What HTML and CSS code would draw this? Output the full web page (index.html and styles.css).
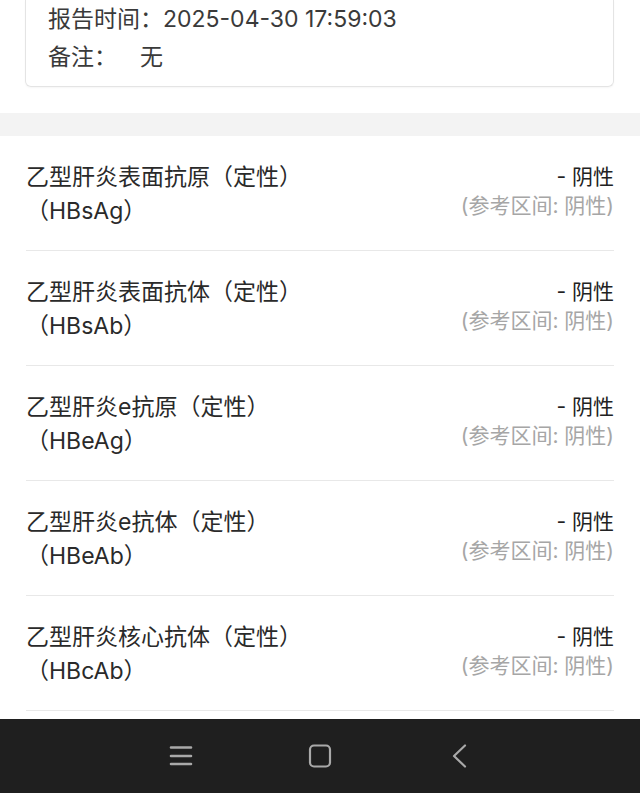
FILE: index.html
```html
<!DOCTYPE html>
<html lang="zh-CN">
<head>
    <meta charset="UTF-8">
    <meta name="viewport" content="width=device-width, initial-scale=1.0">
    <title>检验报告</title>
    <link rel="stylesheet" href="styles.css">
</head>
<body>
    <section class="report-card">
        <div class="info-line">报告时间：2025-04-30 17:59:03</div>
        <div class="info-line"><span class="info-label">备注：</span>无</div>
    </section>

    <div class="band"></div>

    <ul class="result-list">
        <li class="result-row">
            <div class="item-name">
                <span class="name-line">乙型肝炎表面抗原（定性）</span>
                <span class="name-line">（HBsAg）</span>
            </div>
            <div class="item-value">
                <span class="value">- 阴性</span>
                <span class="range">(参考区间: 阴性)</span>
            </div>
        </li>
        <li class="result-row">
            <div class="item-name">
                <span class="name-line">乙型肝炎表面抗体（定性）</span>
                <span class="name-line">（HBsAb）</span>
            </div>
            <div class="item-value">
                <span class="value">- 阴性</span>
                <span class="range">(参考区间: 阴性)</span>
            </div>
        </li>
        <li class="result-row">
            <div class="item-name">
                <span class="name-line">乙型肝炎e抗原（定性）</span>
                <span class="name-line">（HBeAg）</span>
            </div>
            <div class="item-value">
                <span class="value">- 阴性</span>
                <span class="range">(参考区间: 阴性)</span>
            </div>
        </li>
        <li class="result-row">
            <div class="item-name">
                <span class="name-line">乙型肝炎e抗体（定性）</span>
                <span class="name-line">（HBeAb）</span>
            </div>
            <div class="item-value">
                <span class="value">- 阴性</span>
                <span class="range">(参考区间: 阴性)</span>
            </div>
        </li>
        <li class="result-row">
            <div class="item-name">
                <span class="name-line">乙型肝炎核心抗体（定性）</span>
                <span class="name-line">（HBcAb）</span>
            </div>
            <div class="item-value">
                <span class="value">- 阴性</span>
                <span class="range">(参考区间: 阴性)</span>
            </div>
        </li>
    </ul>

    <nav class="nav-bar">
        <svg class="nav-icon" viewBox="0 0 24 24" width="24" height="24">
            <path d="M2 3.5h20M2 12h20M2 20h20" stroke="#a9a9a9" stroke-width="2.6" stroke-linecap="round" fill="none"/>
        </svg>
        <svg class="nav-icon" viewBox="0 0 24 24" width="24" height="24">
            <rect x="2" y="1.5" width="20" height="21" rx="4" stroke="#a9a9a9" stroke-width="2.2" fill="none"/>
        </svg>
        <svg class="nav-icon" viewBox="0 0 24 24" width="24" height="24">
            <path d="M18 1.5L7 12l11 10.5" stroke="#a9a9a9" stroke-width="2.2" stroke-linecap="round" stroke-linejoin="round" fill="none"/>
        </svg>
    </nav>
</body>
</html>
```

FILE: styles.css
```css
body {
    margin: 0;
    height: 100vh;
    display: flex;
    flex-direction: column;
    overflow: hidden;
    background: #fff;
    color: #2b2b2b;
    font-family: Inter, "Noto Sans CJK SC", sans-serif;
}
.report-card {
    margin: 0 26px 0 25px;
    padding: 0 22px 10px;
    border: 1px solid #e4e4e4;
    border-top: none;
    border-radius: 0 0 6px 6px;
    box-shadow: 0 1px 2px rgba(0, 0, 0, 0.04);
    font-size: 23px;
    color: #3a3a3a;
}
.info-line {
    line-height: 38px;
    white-space: nowrap;
}
.info-label {
    display: inline-block;
    width: 92px;
}
.band {
    margin-top: 26px;
    height: 23px;
    background: #f3f3f3;
}
.result-list {
    list-style: none;
    margin: 0 26px;
    padding: 0;
}
.result-row {
    display: flex;
    justify-content: space-between;
    padding: 24px 0 22px;
    border-bottom: 1px solid #e8e8e8;
}
.item-name {
    display: flex;
    flex-direction: column;
    font-size: 23px;
    line-height: 34px;
    color: #2a2a2a;
}
.item-value {
    display: flex;
    flex-direction: column;
    align-items: flex-end;
    margin-top: 2px;
    font-size: 21px;
    line-height: 29px;
}
.value {
    color: #222;
}
.range {
    color: #a6a6a6;
}
.nav-bar {
    margin-top: auto;
    height: 74px;
    background: #1f1f1f;
    display: flex;
    justify-content: center;
    align-items: center;
    gap: 115px;
}
.nav-icon {
    display: block;
}
```
